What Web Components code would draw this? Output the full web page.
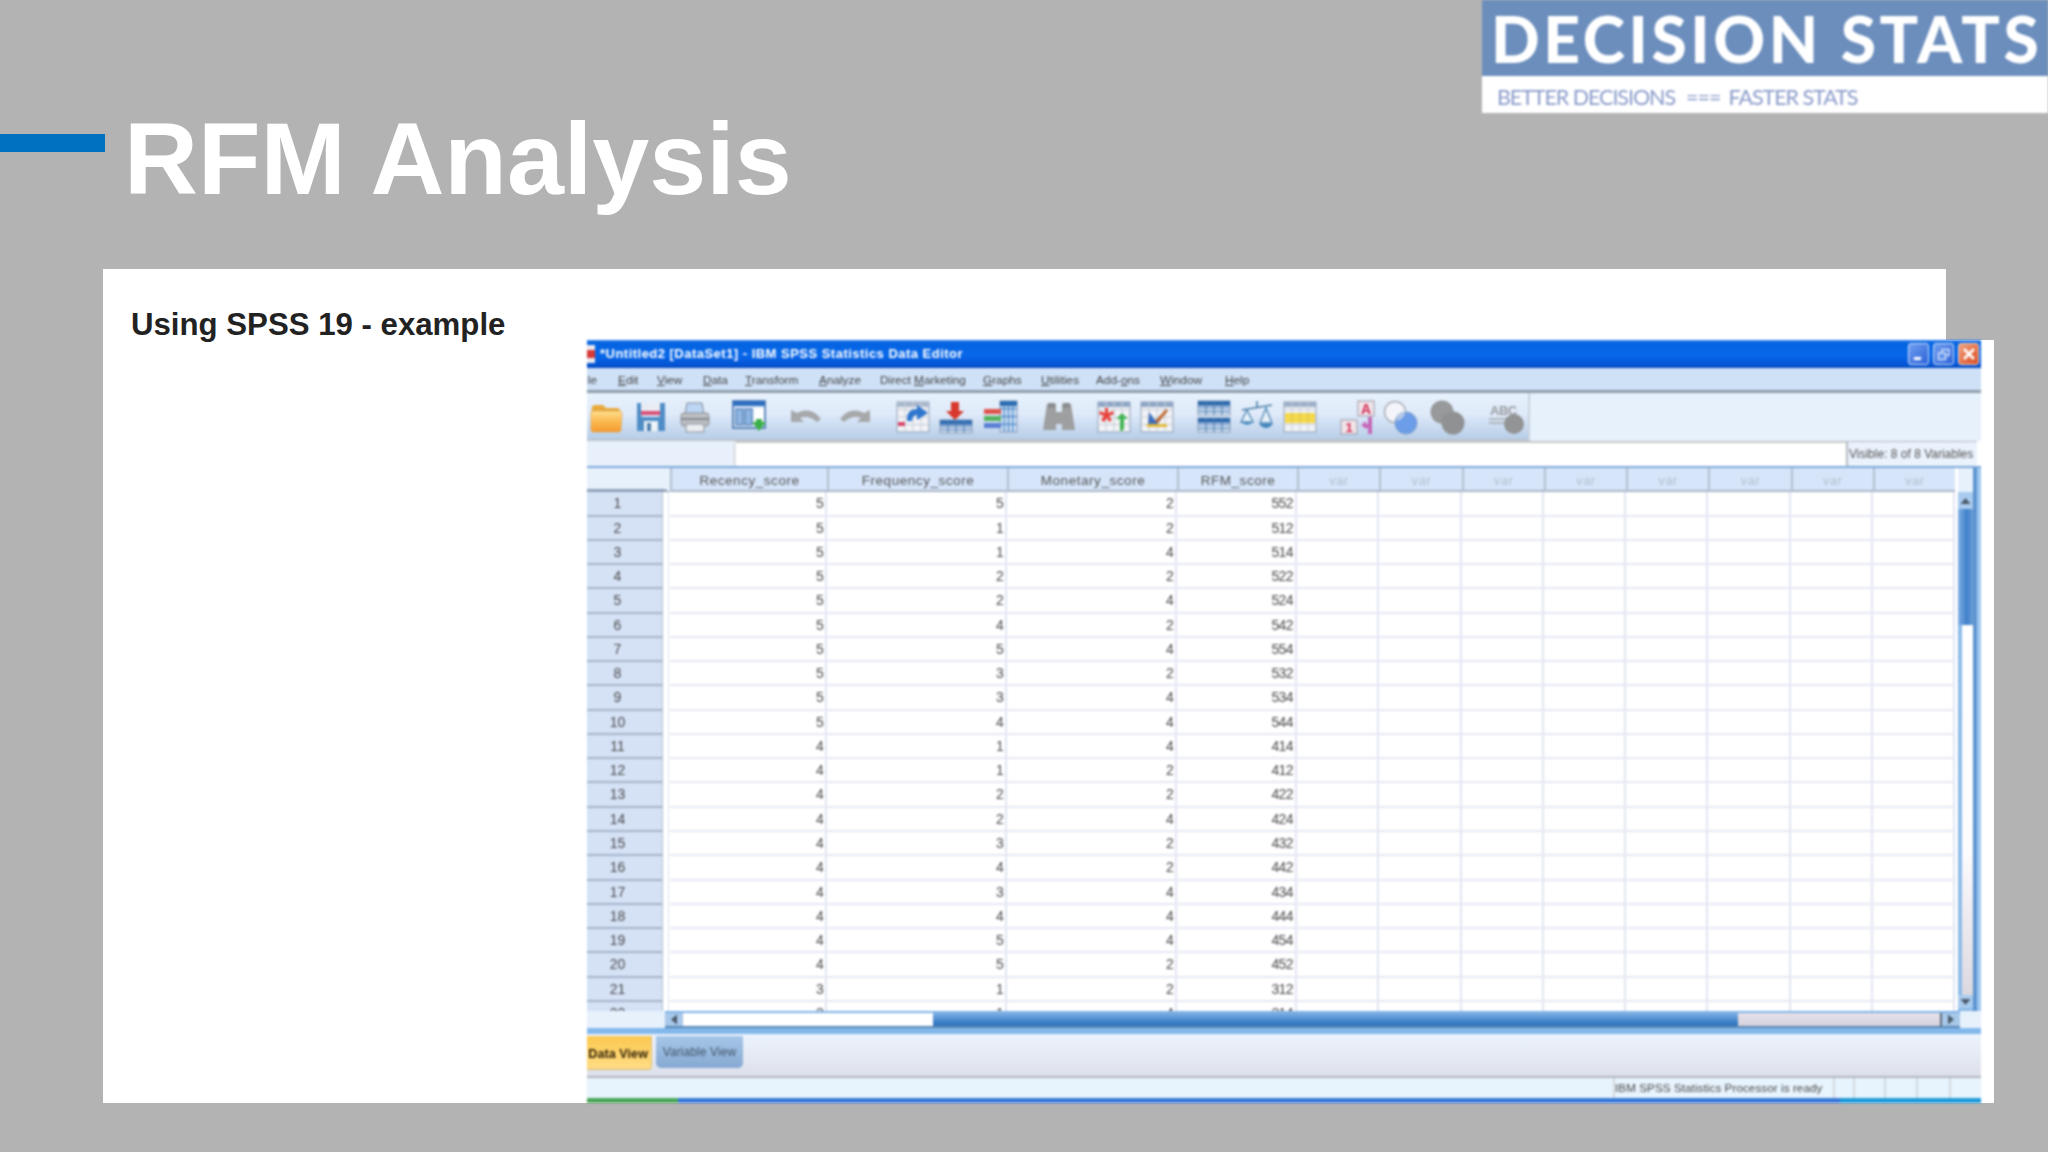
<!DOCTYPE html>
<html lang="en">
<head>
<meta charset="utf-8">
<title>RFM Analysis</title>
<style>
html,body{margin:0;padding:0;background:#b3b3b3;}
body{width:2048px;height:1152px;overflow:hidden;font-family:"Liberation Sans",Arial,sans-serif;}
</style>
</head>
<body>
<rfm-slide>
  <slide-header slot="header" heading="RFM Analysis"></slide-header>
  <slide-card slot="card">Using SPSS 19 - example</slide-card>
  <spss-window slot="window"></spss-window>
</rfm-slide>
<script>
function def(name, css, html, init){
  customElements.define(name, class extends HTMLElement{
    constructor(){super();this.attachShadow({mode:'open'});}
    connectedCallback(){
      if(this.shadowRoot.childElementCount)return;
      const h=typeof html==='function'?html(this):html;
      this.shadowRoot.innerHTML='<style>'+css+'</style>'+h;
      if(init)init(this);
    }
  });
}
const SANS='"Liberation Sans",Arial,sans-serif';

/* ---------- icon artwork ---------- */
function tbl(x,y,w,h,c,line,head){
  let s=`<rect x="${x}" y="${y}" width="${w}" height="${h}" fill="${c}" stroke="#8f9fb5" stroke-width="1"/>`;
  if(head)s+=`<rect x="${x}" y="${y}" width="${w}" height="5" fill="${head}"/>`;
  for(let i=1;i<4;i++)s+=`<path d="M${x+w*i/4} ${y}V${y+h}" stroke="${line}" stroke-width="1"/>`;
  for(let i=1;i<4;i++)s+=`<path d="M${x} ${y+h*i/4}H${x+w}" stroke="${line}" stroke-width="1"/>`;
  return s;
}
const ICONS={
 folder:`<defs><linearGradient id="f" x1="0" y1="0" x2="0" y2="1"><stop offset="0" stop-color="#ffe090"/><stop offset=".45" stop-color="#fbbd55"/><stop offset="1" stop-color="#f59a2e"/></linearGradient></defs>
   <path d="M3 8q0-3 3-3h8l3 3h11q3 0 3 3v3H2z" fill="#e8a93a"/><path d="M2 13q0-2 3-2h25q3 0 3 2l-1 17q0 2-3 2H5q-3 0-3-2z" fill="url(#f)" stroke="#d9a050" stroke-width=".6"/>`,
 save:`<path d="M3 3h4v12q0 2 2 2h15q2 0 2-2V3h5v28H3z" fill="#4f8dc6"/><rect x="7" y="3" width="19" height="8" fill="#e9edf3"/><rect x="7" y="11" width="19" height="4" fill="#d94f77"/><rect x="10" y="21" width="14" height="10" fill="#eef3f8"/><rect x="13" y="23" width="4" height="8" fill="#4f7fb0"/>`,
 print:`<path d="M9 3h15l2 12H7z" fill="#bcd6f3" stroke="#7f8a99"/><rect x="3" y="13" width="28" height="13" rx="3" fill="#bcbfc3" stroke="#8b8f96"/><rect x="3" y="18" width="28" height="2" fill="#85898f"/><rect x="8" y="24" width="18" height="8" fill="#eceff2" stroke="#8b8f96"/>`,
 vars:`<rect x="1" y="1" width="32" height="27" fill="#d9e7f7" stroke="#3a6aa8" stroke-width="1.5"/><rect x="1" y="1" width="32" height="5" fill="#2f6fc0"/><rect x="4" y="9" width="7" height="16" fill="#8fb6e2" stroke="#3a6aa8"/><rect x="13" y="9" width="7" height="16" fill="#8fb6e2" stroke="#3a6aa8"/><rect x="22" y="8" width="10" height="18" fill="#fff"/><path d="M20 22h4v-3h6v3h4l-7 9z" fill="#3bb04a"/>`,
 undo:`<path d="M2 10v12h13l-4-4q9-3 17 4l4-3Q22 6 8 13z" fill="#a6a8aa"/>`,
 redo:`<path d="M32 10v12H19l4-4q-9-3-17 4l-4-3Q12 6 26 13z" fill="#a6a8aa"/>`,
 goto:tbl(1,2,32,30,'#f1f3f7','#c9cdd6','#a9b8cc')+`<rect x="2" y="22" width="7" height="4" fill="#d9476a"/><path d="M11 19q0-10 10-10V5l11 8-11 7v-5q-5 0-5 6h-5z" fill="#2f76cf"/>`,
 insert:`<path d="M12 2h8v9h5l-9 9-9-9h5z" fill="#d9382c"/>`+tbl(1,20,32,13,'#cfe0f5','#4e79ad','#2f6fb5'),
 split:tbl(17,1,17,31,'#c7dcf5','#3a79bd','#2a6ab0')+`<rect x="1" y="9" width="17" height="5" fill="#e0534c"/><rect x="1" y="16" width="17" height="5" fill="#55b35f"/><rect x="1" y="23" width="17" height="5" fill="#5a7fd4"/>`,
 binoc:`<path d="M5 4h9v8h6V4h9l4 26H20v-6h-6v6H1z" fill="#9d9fa0"/><rect x="6" y="3" width="7" height="5" fill="#8a8c8d"/><rect x="21" y="3" width="7" height="5" fill="#8a8c8d"/>`,
 cases:tbl(1,2,32,30,'#f1f3f7','#c9cdd6','#8fa6c6')+`<path d="M11 8v5l5-2 1 3-5 2 3 4-3 2-2-4-3 4-3-2 3-4-5-2 1-3 5 2V8z" fill="#e8403a"/><path d="M19 19l6-6 6 6h-4v9q0 3-4 3v-3V19z" fill="#44b455"/>`,
 weight:tbl(1,2,32,30,'#f1f3f7','#c9cdd6','#8fa6c6')+`<path d="M9 12l6 8 11-8-9 13H8z" fill="#3f6fbb"/><path d="M26 9l2 2-10 12-3-2z" fill="#c2703a"/><rect x="7" y="24" width="20" height="3" fill="#e3b83a"/>`,
 stable:tbl(1,1,32,14,'#cfe0f5','#4e79ad','#2a6ab0')+tbl(1,18,32,14,'#cfe0f5','#4e79ad','#2a6ab0'),
 scales:`<path d="M17 1v6M2 10l30-5" stroke="#4d7fa8" stroke-width="1.6" fill="none"/><path d="M7 10L1 22h12zM26 8l-6 15h12z" fill="#e6f0f8" stroke="#4d86b5" stroke-width="1.3"/><path d="M1 22q6 6 12 0z" fill="#4d8fc4"/><path d="M19 24q7 8 14 0z" fill="#3f84bb"/>`,
 yellow:tbl(1,2,32,30,'#f1f3f7','#c9cdd6','#9db0c9')+`<rect x="2" y="13" width="30" height="10" fill="#f4d84a"/>`+`<path d="M9 13v10M17 13v10M25 13v10" stroke="#d9c05a"/>`,
 ab:`<rect x="18" y="1" width="16" height="15" fill="#f2e5ea" stroke="#9a9aa5"/><text x="26" y="14" font-family="${SANS}" font-size="14" font-weight="700" fill="#d02a52" text-anchor="middle">A</text><rect x="1" y="20" width="16" height="14" fill="#f2e5ea" stroke="#9a9aa5"/><text x="9" y="32" font-family="${SANS}" font-size="13" font-weight="700" fill="#d02a52" text-anchor="middle">1</text><path d="M21 25l5-4v3h2v-7h4v17h-4v-6h-2v1z" fill="#c667b8"/>`,
 venn:`<circle cx="12" cy="12" r="10.5" fill="#f4f5fa" stroke="#a9adb5" stroke-width="1.4"/><circle cx="23" cy="23" r="11" fill="#6c9de8" stroke="#7e9cc4"/><path d="M13 21a10.5 10.5 0 0 1 9.5-9.5a10.5 10.5 0 0 1-9.5 9.5z" fill="#b5c9e8"/>`,
 gray:`<circle cx="12" cy="12" r="11.5" fill="#97999a"/><circle cx="23" cy="23" r="11.5" fill="#8f9192"/>`,
 abc:`<text x="1" y="15" font-family="${SANS}" font-size="13" font-weight="700" fill="#9a9c9f" letter-spacing="-.5">ABC</text><path d="M0 19h26M0 23h16" stroke="#a7a9ac" stroke-width="1.5"/><circle cx="25" cy="24" r="10" fill="#929496"/>`
};
def('tool-icon',`:host{display:block;width:34px;height:34px;flex:none;}svg{display:block;width:34px;height:34px;overflow:visible;}`,
  el=>`<svg viewBox="0 0 34 34" xmlns="http://www.w3.org/2000/svg" aria-hidden="true">${ICONS[el.getAttribute('name')]}</svg>`);

/* ---------- slide frame ---------- */
def('rfm-slide',`:host{display:block;position:relative;width:2048px;height:1152px;background:#b3b3b3;}
  ::slotted([slot=window]){position:absolute;left:587px;top:340px;}`,
  `<slot name="header"></slot><slot name="card"></slot><slot name="window"></slot>`);

def('slide-header',`:host{display:flex;justify-content:space-between;align-items:flex-start;height:269px;font-family:${SANS};}
  .lead{display:flex;align-items:flex-start;}
  .bar{width:105px;height:18px;margin-top:134px;background:#0070c0;}
  h1{margin:108px 0 0 19px;font:700 102.4px/102px ${SANS};color:#fff;letter-spacing:0;filter:blur(.6px);}`,
  el=>`<div class="lead"><div class="bar"></div><h1>${el.getAttribute('heading')}</h1></div><decision-logo></decision-logo>`);

def('decision-logo',`:host{display:block;width:566px;height:113px;background:#fff;filter:blur(.8px);overflow:hidden;}
  .top{height:76px;background:#6c8ebd;padding-left:9px;box-sizing:border-box;color:#fff;font:900 64px/78px Lato,${SANS};letter-spacing:3.6px;white-space:nowrap;}
  .sub{height:37px;display:flex;align-items:center;padding:5px 0 0 15px;box-sizing:border-box;color:#8a9bca;font:400 21.5px/32px Lato,${SANS};letter-spacing:-1.05px;white-space:nowrap;}
  .sub span:nth-child(2){margin:0 8px 0 11px;letter-spacing:-1px;}`,
  `<div class="top">DECISION STATS</div><div class="sub"><span>BETTER DECISIONS</span><span>===</span><span>FASTER STATS</span></div>`);

def('slide-card',`:host{display:block;margin-left:103px;width:1843px;height:834px;box-sizing:border-box;padding:36px 28px;background:#fff;color:#222;font:700 31.2px/40px ${SANS};}`,
  `<slot></slot>`);

/* ---------- SPSS window ---------- */
def('spss-window',`:host{display:block;width:1407px;height:763px;background:#fff;font-family:${SANS};}
  .w{width:1394px;height:763px;display:flex;flex-direction:column;overflow:hidden;filter:blur(.8px);background:#e7f1fc;}`,
  `<div class="w"><spss-titlebar></spss-titlebar><spss-menubar></spss-menubar><spss-toolbar></spss-toolbar><spss-formula></spss-formula><spss-sheet></spss-sheet><spss-hscroll></spss-hscroll><spss-tabs></spss-tabs><spss-status></spss-status></div>`);

def('spss-titlebar',`:host{display:flex;align-items:center;height:28px;flex:none;background:linear-gradient(#3a86ee 0,#0463e0 10%,#0868ea 55%,#0352d2 92%,#0a49b8 100%);color:#fff;font:700 13px/28px ${SANS};letter-spacing:.48px;white-space:nowrap;position:relative;}
  .app{width:13px;height:18px;margin:0 0 0 -5px;background:linear-gradient(#e9e9ee 30%,#d83a3a 30%,#d83a3a 70%,#e9e9ee 70%);flex:none;}
  .t{margin-left:5px;}
  .btns{margin-left:auto;display:flex;gap:4px;padding-right:2px;}
  .b{width:21px;height:22px;border-radius:3px;border:1px solid #cfe0fb;box-sizing:border-box;background:linear-gradient(135deg,#6f9ef0,#2c62d8);display:flex;align-items:center;justify-content:center;}
  .c{background:linear-gradient(135deg,#f0a27e,#db4a1f);border-color:#f7d6c8;}
  svg{display:block;}`,
  `<div class="app"></div><div class="t">*Untitled2 [DataSet1] - IBM SPSS Statistics Data Editor</div>
   <div class="btns">
    <div class="b"><svg width="13" height="13" viewBox="0 0 13 13"><rect x="2" y="9" width="7" height="3" fill="#fff"/></svg></div>
    <div class="b"><svg width="13" height="13" viewBox="0 0 13 13" fill="none" stroke="#cfe0fb" stroke-width="1.5"><rect x="5" y="1.5" width="7" height="6"/><rect x="1.5" y="5" width="7" height="6.5" fill="#5f8fe8"/></svg></div>
    <div class="b c"><svg width="14" height="14" viewBox="0 0 14 14" stroke="#fff" stroke-width="2.6"><path d="M2 2l10 10M12 2L2 12"/></svg></div>
   </div>`);

def('spss-menubar',`:host{display:flex;flex:none;align-items:flex-start;height:22px;background:#cfe1f7;border-bottom:3px solid #8f9dac;color:#444;font:11.8px/24px ${SANS};white-space:nowrap;overflow:hidden;}
  span{display:block;flex:none;}
  u{text-decoration:underline;text-underline-offset:1px;}`,
  ()=>{
    const m=[['F','ile',-9,20],['E','dit',20,18],['V','iew',21,29],['D','ata',17,26],['T','ransform',16,56],['A','nalyze',18,45],['Direct ','M','arketing',16,86,1],['G','raphs',17,41],['U','tilities',17,37],['Add-','o','ns',18,45,1],['W','indow',19,46],['H','elp',19,24]];
    return m.map(i=>{
      if(i[5]) return `<span style="margin-left:${i[3]}px;width:${i[4]}px">${i[0]}<u>${i[1]}</u>${i[2]}</span>`;
      return `<span style="margin-left:${i[2]}px;width:${i[3]}px"><u>${i[0]}</u>${i[1]}</span>`;
    }).join('');
  });

def('spss-toolbar',`:host{display:flex;flex:none;height:48px;background:#e7f1fc;}
  .tb{display:flex;align-items:center;width:943px;box-sizing:border-box;padding:1px 0 0 2px;background:linear-gradient(#e8f2fc 0,#dfeafa 45%,#b7cee8 100%);border-right:2px solid #c9d3de;border-bottom:2px solid #bcc4cc;}`,
  ()=>{
    const list=[['folder',0],['save',11],['print',10],['vars',20],['undo',23],['redo',15],['goto',24],['insert',9],['split',10],['binoc',25],['cases',21],['weight',9],['stable',23],['scales',9],['yellow',9],['ab',23],['venn',9],['gray',13],['abc',25]];
    return `<div class="tb">`+list.map(i=>`<tool-icon name="${i[0]}" style="margin-left:${i[1]}px"></tool-icon>`).join('')+`</div>`;
  });

def('spss-formula',`:host{display:flex;flex:none;height:25px;background:#fff;color:#555;font:12px/25px ${SANS};white-space:nowrap;}
  .l{width:146px;background:#e8f1fb;border-right:3px solid #dfe3e8;}
  .m{flex:1;border-top:2px solid #c8c8c8;}
  .v{width:131px;box-sizing:border-box;background:#eaf2fc;border-left:2px solid #b5bcc5;border-top:1px solid #b5bcc5;padding-left:1px;margin-right:4px;}`,
  `<div class="l"></div><div class="m"></div><div class="v">Visible: 8 of 8 Variables</div>`);

def('spss-sheet',`:host{display:flex;flex:none;height:545px;box-sizing:border-box;border-top:2px solid #7da8d8;background:#fff;overflow:hidden;}
  spss-grid{flex:none;}
  spss-vscroll{flex:none;}`,
  `<spss-grid></spss-grid><spss-vscroll></spss-vscroll>`);

const DATA=[[5,5,2,552],[5,1,2,512],[5,1,4,514],[5,2,2,522],[5,2,4,524],[5,4,2,542],[5,5,4,554],[5,3,2,532],[5,3,4,534],[5,4,4,544],[4,1,4,414],[4,1,2,412],[4,2,2,422],[4,2,4,424],[4,3,2,432],[4,4,2,442],[4,3,4,434],[4,4,4,444],[4,5,4,454],[4,5,2,452],[3,1,2,312],[3,1,4,314]];
const COLS='83px 157px 180px 170px 120px repeat(8,82.25px)';
def('spss-grid',`:host{display:grid;grid-template-columns:${COLS};grid-auto-rows:24.28px;width:1368px;height:543px;overflow:hidden;align-content:start;color:#4a4a4a;font:14px/24px ${SANS};background:#fff;}
  .corner{background:#e7f1fc;border-right:5px solid #e7f1fc;border-bottom:3px solid #8fa0b8;height:24px;box-sizing:border-box;}
  .h{height:24px;box-sizing:border-box;background:#d6e5fa;border-left:2px solid #b2bfd0;border-bottom:2px solid #aab6c8;text-align:center;font-size:13.5px;letter-spacing:.55px;line-height:26px;white-space:nowrap;color:#555;}
  .h.var{color:#b4bfcc;font-size:12.5px;}
  .rh{box-sizing:border-box;text-align:center;padding-right:14px;background:#d5e2f6;margin-right:7px;border-bottom:2px solid #a4b3c8;border-right:1px solid #b4c2d4;line-height:23px;box-shadow:5px 0 0 #fff,6px 0 0 #dfe3f2;}
  .c{box-sizing:border-box;text-align:right;padding-right:1px;border-bottom:2px solid #e6e8f4;border-right:2px solid #e2e5f3;line-height:23px;letter-spacing:.2px;}
  .c.rfm{letter-spacing:-.6px;padding-right:2px;}`,
  ()=>{
    let s=`<div class="corner"></div>`;
    ['Recency_score','Frequency_score','Monetary_score','RFM_score'].forEach(n=>s+=`<div class="h">${n}</div>`);
    for(let i=0;i<8;i++)s+=`<div class="h var">var</div>`;
    DATA.forEach((r,i)=>{
      s+=`<div class="rh">${i+1}</div>`;
      r.forEach((v,j)=>s+=`<div class="c${j==3?' rfm':''}">${v}</div>`);
      for(let k=0;k<8;k++)s+=`<div class="c"></div>`;
    });
    return s;
  });

def('spss-vscroll',`:host{display:flex;flex-direction:column;width:26px;height:543px;box-sizing:border-box;padding-left:3px;background:linear-gradient(90deg,#fff 0,#fff 3px,#8cbbe8 3px,#8cbbe8 18px,#5d94cf 18px,#5d94cf 22px,#a0c8ee 22px);}
  .cap{height:24px;width:15px;background:#e7f1fc;flex:none;}
  .a{height:17px;width:15px;background:#a9cbee;flex:none;display:flex;align-items:center;justify-content:center;}
  .th{height:116px;width:15px;flex:none;background:linear-gradient(90deg,#7fb0e4,#3f7fc8 60%,#6ea2d8);}
  .tr{flex:1;width:11px;margin-left:4px;background:linear-gradient(#fff,#fdfcfe 60%,#dcd8e0);}
  svg{display:block;}`,
  `<div class="cap"></div><div class="a"><svg width="11" height="6" viewBox="0 0 11 6"><path d="M5.5 0l5 6H.5z" fill="#4b5a6a"/></svg></div><div class="th"></div><div class="tr"></div><div class="a" style="height:13px"><svg width="11" height="6" viewBox="0 0 11 6"><path d="M5.5 6l5-6H.5z" fill="#4b5a6a"/></svg></div><div style="height:3px;flex:none"></div>`);

def('spss-hscroll',`:host{display:flex;flex:none;height:23px;box-sizing:border-box;border-bottom:6px solid #83b8ec;background:#e7f1fc;align-items:stretch;}
  .pad{width:78px;}
  .bar{display:flex;width:1295px;border-top:2px solid #7fb2e6;border-bottom:2px solid #5a86b4;background:#a9cbee;box-sizing:border-box;}
  .a{width:18px;background:#a8c8ea;display:flex;align-items:center;justify-content:center;flex:none;}
  .w{width:250px;background:#fff;}
  .th{width:805px;background:linear-gradient(#7fb0e4,#3f82c8 65%,#2f72b8);}
  .tr{width:202px;background:linear-gradient(#e6e2ea,#d6d2dc);}
  .corner{width:20px;background:#e7f1fc;}
  svg{display:block;}`,
  `<div class="pad"></div><div class="bar"><div class="a"><svg width="6" height="11" viewBox="0 0 6 11"><path d="M0 5.5L6 .5v10z" fill="#4b5a6a"/></svg></div><div class="w"></div><div class="th"></div><div class="tr"></div><div class="a" style="width:20px;border-left:2px solid #5f6b78;box-sizing:border-box"><svg width="6" height="11" viewBox="0 0 6 11"><path d="M6 5.5L0 .5v10z" fill="#4b5a6a"/></svg></div></div><div class="corner"></div>`);

def('spss-tabs',`:host{display:flex;flex:none;height:44px;box-sizing:border-box;align-items:flex-start;gap:4px;padding-top:2px;background:linear-gradient(#edf4fd,#dde0eb);border-bottom:2px solid #b5b5ba;font:12px/32px ${SANS};white-space:nowrap;}
  .d{width:65px;height:34px;box-sizing:border-box;background:linear-gradient(#fcc84f,#ffdc85);border-radius:0 0 4px 0;border-right:1px solid #e0c080;border-bottom:1px solid #d8b878;color:#33240a;font-weight:700;font-size:12.5px;line-height:36px;text-align:right;padding-right:3px;overflow:hidden;letter-spacing:.1px;}
  .v{width:87px;height:32px;box-sizing:border-box;background:linear-gradient(#a7c6e8,#85a9d2);border-radius:0 0 5px 5px;color:#44566c;text-align:center;line-height:32px;letter-spacing:.1px;}`,
  `<div class="d">Data View</div><div class="v">Variable View</div>`);

def('spss-status',`:host{display:flex;flex-direction:column;flex:none;height:25px;background:#e7f3fd;font:11.6px/20px ${SANS};color:#4a4a4a;white-space:nowrap;}
  .r{height:20px;display:flex;justify-content:flex-end;}
  .s{box-sizing:border-box;border-left:2px solid #d3d8df;height:20px;}
  .msg{width:220px;padding-left:0;letter-spacing:.1px;}
  .bb{height:5px;display:flex;flex:none;}
  .bb i{display:block;height:5px;}`,
  `<div class="r"><div class="s msg">IBM SPSS Statistics Processor is ready</div><div class="s" style="width:20px"></div><div class="s" style="width:31px"></div><div class="s" style="width:32px"></div><div class="s" style="width:33px"></div><div class="s" style="width:32px"></div></div>
   <div class="bb"><i style="width:91px;background:#4ca65a"></i><i style="width:1162px;background:#3a78d8"></i><i style="width:141px;background:#1f9ad8"></i></div>`);
</script>
</body>
</html>
